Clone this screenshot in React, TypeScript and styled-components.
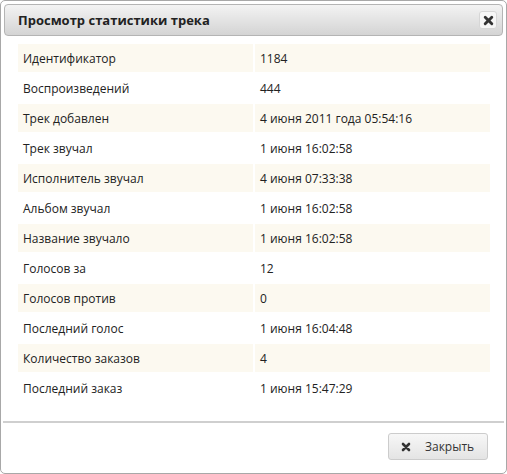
import React from "react";
import styled, { createGlobalStyle } from "styled-components";

const rows: [string, string][] = [
  ["Идентификатор", "1184"],
  ["Воспроизведений", "444"],
  ["Трек добавлен", "4 июня 2011 года 05:54:16"],
  ["Трек звучал", "1 июня 16:02:58"],
  ["Исполнитель звучал", "4 июня 07:33:38"],
  ["Альбом звучал", "1 июня 16:02:58"],
  ["Название звучало", "1 июня 16:02:58"],
  ["Голосов за", "12"],
  ["Голосов против", "0"],
  ["Последний голос", "1 июня 16:04:48"],
  ["Количество заказов", "4"],
  ["Последний заказ", "1 июня 15:47:29"],
];

const CrossIcon = ({ size }: { size: number }) => (
  <svg width={size} height={size} viewBox="0 0 10 10">
    <path
      d="M2 2 L8 8 M8 2 L2 8"
      stroke="#333"
      strokeWidth="2.6"
      strokeLinecap="round"
    />
  </svg>
);

const App = () => {
  return (
    <>
      <Global />
      <Dialog>
        <TitleBar>
          <Title>Просмотр статистики трека</Title>
          <CloseBox>
            <CrossIcon size={11} />
          </CloseBox>
        </TitleBar>
        <Content>
          <Table>
            <tbody>
              {rows.map(([k, v], i) => (
                <Row key={k} $odd={i % 2 === 0}>
                  <Cell>{k}</Cell>
                  <Cell>{v}</Cell>
                </Row>
              ))}
            </tbody>
          </Table>
        </Content>
        <Footer>
          <Button>
            <CrossIcon size={10} />
            <span>Закрыть</span>
          </Button>
        </Footer>
      </Dialog>
    </>
  );
};

export default App;

const Global = createGlobalStyle`
  html, body {
    margin: 0;
    padding: 0;
    background: #fff;
  }
  body {
    font-family: "Open Sans", "DejaVu Sans", sans-serif;
    color: #222;
  }
`;

const Dialog = styled.div`
  box-sizing: border-box;
  width: 507px;
  height: 474px;
  border: 1px solid #a8a8a8;
  border-radius: 5px;
  padding: 3px;
  display: flex;
  flex-direction: column;
  background: #fff;
`;

const TitleBar = styled.div`
  height: 32px;
  box-sizing: border-box;
  border: 1px solid #b4b4b4;
  border-radius: 4px;
  background: linear-gradient(#f3f3f3, #d4d4d4);
  display: flex;
  align-items: center;
  justify-content: space-between;
  padding: 0 5px 0 13px;
`;

const Title = styled.div`
  font-weight: 700;
  font-size: 13px;
  color: #222;
`;

const CloseBox = styled.div`
  width: 18px;
  height: 18px;
  box-sizing: border-box;
  border: 1px solid #d6d6d6;
  border-radius: 3px;
  background: #f6f6f6;
  display: flex;
  align-items: center;
  justify-content: center;
`;

const Content = styled.div`
  flex: 1;
  padding: 6px 11px 0 12px;
`;

const Table = styled.table`
  width: 100%;
  border-spacing: 2px;
  table-layout: fixed;
`;

const Row = styled.tr<{ $odd: boolean }>`
  background: ${(p) => (p.$odd ? "#fcf9f0" : "#fff")};
`;

const Cell = styled.td`
  height: 28px;
  padding: 0 5px;
  font-size: 12px;
  color: #222;
  vertical-align: middle;
`;

const Footer = styled.div`
  border-top: 2px solid #cfcfcf;
  height: 47px;
  display: flex;
  align-items: center;
  justify-content: flex-end;
  padding-right: 16px;
  margin: 0 -1px;
`;

const Button = styled.div`
  width: 100px;
  height: 27px;
  box-sizing: border-box;
  border: 1px solid #cccccc;
  border-radius: 3px;
  background: linear-gradient(#f7f7f7, #e4e4e4);
  display: flex;
  align-items: center;
  gap: 14px;
  padding-left: 12px;
  font-size: 12px;
  color: #333;
`;
